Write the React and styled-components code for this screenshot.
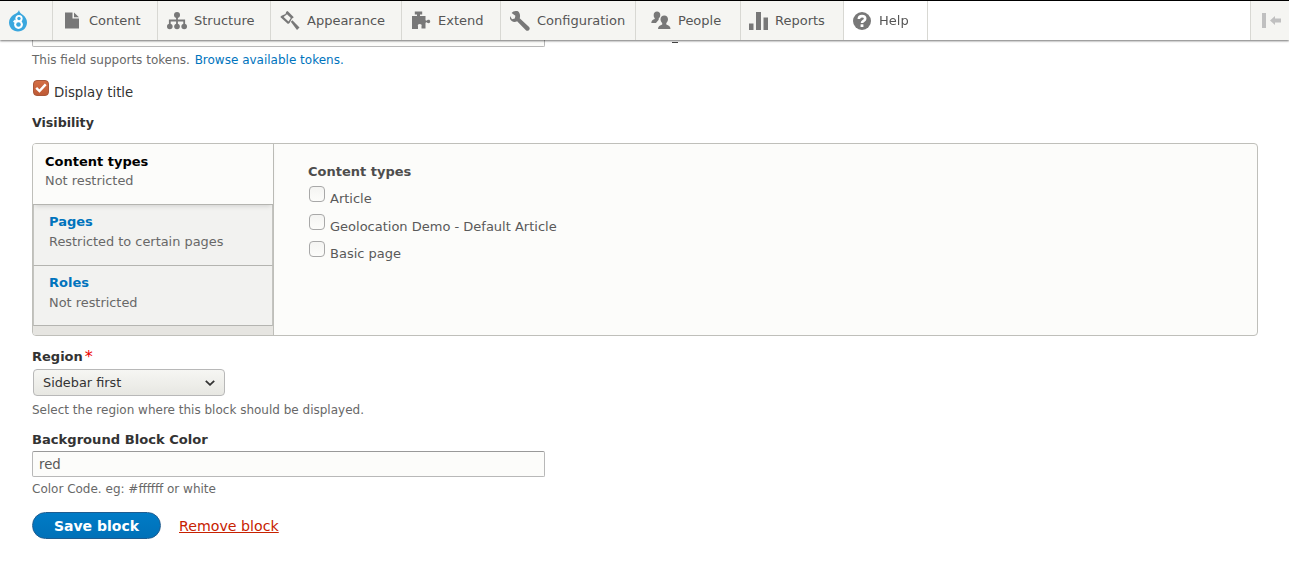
import styled, { createGlobalStyle } from "styled-components";

const GlobalStyle = createGlobalStyle`
  html, body {
    margin: 0;
    padding: 0;
    background: #fff;
    font-family: "DejaVu Sans", sans-serif;
    color: #333;
  }
`;

const ICON = "#787878";

const DrupalLogo = () => (
  <svg width="20" height="22" viewBox="0 0 20 22">
    <path
      fill="#3aa7de"
      d="M11 0c.5 2.500 2 3.500 4 5 2.500 2 4 4.500 4 7.500 0 5-4 9-9 9s-9-4-9-9c0-3.500 2-6 5-8C9 3 10.500 2 11 0z"
    />
    <circle cx="11" cy="8.500" r="3.600" fill="#fff" />
    <circle cx="10.500" cy="14.500" r="4.400" fill="#fff" />
    <circle cx="11" cy="8.500" r="1.700" fill="#3aa7de" />
    <circle cx="10.500" cy="14.500" r="2.300" fill="#3aa7de" />
    <path fill="#fff" d="M5 11.500l2-2 1.500 1.500-2 2z" />
  </svg>
);

const FileIcon = () => (
  <svg width="14" height="17" viewBox="0 0 14 17">
    <path fill={ICON} d="M0 .5h7.500v6h6.500v10H0zM9 .5l5 4.700H9z" />
  </svg>
);

const StructureIcon = () => (
  <svg width="20" height="18" viewBox="0 0 20 18">
    <circle cx="10" cy="3" r="3" fill={ICON} />
    <circle cx="2.800" cy="14.500" r="2.800" fill={ICON} />
    <circle cx="10" cy="14.500" r="2.800" fill={ICON} />
    <circle cx="17.200" cy="14.500" r="2.800" fill={ICON} />
    <path fill="none" stroke={ICON} strokeWidth="1.800" d="M10 4v8M2.800 12V8.500h14.400V12" />
  </svg>
);

const GavelIcon = () => (
  <svg width="20" height="20" viewBox="0 0 20 20">
    <path fill={ICON} d="M7.600 0L13.800 6.200 11.800 7.800 9.600 12 8 13 .3 6 1.500 4.800 5.500 3 6.200 .8z" />
    <path fill="#f5f5f2" d="M7 3.300L10.800 7 8.500 10.500 3.600 6z" />
    <path fill={ICON} d="M10.800 10.700L12.400 9.300 19.500 16.500 17 19z" />
  </svg>
);

const PuzzleIcon = () => (
  <svg width="20" height="19" viewBox="0 0 20 19">
    <path
      fill={ICON}
      d="M1 5h5V3.500H3.800V.5h7.400v3H9V5h5.500v4c.5 1 1 .8 1.700.3 1.200-.8 3-.6 3 1.200s-1.800 2-3 1.200c-.7-.5-1.200-.7-1.700.3v5.500H10.500v-2.200c.7-1.500-.5-2.300-1.700-2.300S6.300 13.800 7 15.500V18H1z"
    />
  </svg>
);

const WrenchIcon = () => (
  <svg width="20" height="20" viewBox="0 0 20 20">
    <path
      fill={ICON}
      d="M7.900.3c-2.300-.8-4.900 0-6.300 1.800L5.400 4.700 4.800 7.500 2 8.200-.2 4.600C-1 7.800 1.400 10.800 4.500 10.900c1 0 1.800-.1 2.600-.6l8.800 8.900c.8.8 2.100.8 2.900 0l.3-.3c.8-.8.800-2 0-2.800L9.700 7.200c.9-2.700.1-5.700-1.800-6.900z"
    />
  </svg>
);

const PeopleIcon = () => (
  <svg width="20" height="19" viewBox="0 0 20 19">
    <path
      fill={ICON}
      d="M6 .5c2.100 0 3.300 1.500 3.300 3.500 0 1.500-.7 2.700-1.600 3.500v1.300C6.900 9.500 6 10.700 5 12H.3c0-2.500 1.600-3.300 3.400-4V7C2.900 6.300 2.700 5.200 2.700 4 2.700 2 3.900.5 6 .5z"
    />
    <path
      fill={ICON}
      d="M13.300 4.500c2.300 0 3.700 1.600 3.700 3.800 0 1.500-.7 2.900-1.700 3.700v1.500c2.200.8 4.200 1.800 4.200 4.500H7c0-2.700 2-3.700 4.200-4.500V12c-1-.8-1.700-2.200-1.700-3.700 0-2.200 1.500-3.800 3.800-3.800z"
    />
  </svg>
);

const BarsIcon = () => (
  <svg width="19" height="18" viewBox="0 0 19 18">
    <path fill={ICON} d="M0 11.500h4.500V18H0zM7 0h5v18H7zM14.500 5.500H19V18h-4.500z" />
  </svg>
);

const HelpIcon = () => (
  <svg width="18" height="18" viewBox="0 0 18 18">
    <circle cx="9" cy="9" r="9" fill={ICON} />
    <path
      fill="none"
      stroke="#fff"
      strokeWidth="2.600"
      d="M5.800 7c.1-1.900 1.400-2.900 3.200-2.900S12.200 5.100 12.200 6.700c0 2.100-3.200 2.300-3.200 4.300"
    />
    <rect x="7.600" y="12.300" width="2.800" height="2.700" fill="#fff" />
  </svg>
);

const CollapseIcon = () => (
  <svg width="20" height="15" viewBox="0 0 20 15">
    <path fill="#c0c0c0" d="M0 0h4v15H0zM8 7.500l5-4.500v2.500h6v4h-6V12z" />
  </svg>
);

const CheckIcon = () => (
  <svg width="12" height="10" viewBox="0 0 12 10">
    <path fill="none" stroke="#fff" strokeWidth="2.400" d="M1.200 4.800l3.300 3.300 6.200-6.700" />
  </svg>
);

const menuItems = [
  { label: "Content", width: 105, icon: <FileIcon />, offset: 12, gap: 10 },
  { label: "Structure", width: 113, icon: <StructureIcon />, offset: 9, gap: 7 },
  { label: "Appearance", width: 131, icon: <GavelIcon />, offset: 9, gap: 7 },
  { label: "Extend", width: 99, icon: <PuzzleIcon />, offset: 9, gap: 7 },
  { label: "Configuration", width: 135, icon: <WrenchIcon />, offset: 9, gap: 7 },
  { label: "People", width: 105, icon: <PeopleIcon />, offset: 15, gap: 7 },
  { label: "Reports", width: 103, icon: <BarsIcon />, offset: 8, gap: 7 },
  { label: "Help", width: 84, icon: <HelpIcon />, offset: 9, gap: 8, active: true },
];

const blocks = [
  { title: "Pages", summary: "Restricted to certain pages" },
  { title: "Roles", summary: "Not restricted" },
];

const contentTypes = ["Article", "Geolocation Demo - Default Article", "Basic page"];

export default function App() {
  return (
    <>
      <GlobalStyle />
      <Toolbar>
        <LogoTab>
          <DrupalLogo />
        </LogoTab>
        {menuItems.map((item) => (
          <MenuTab
            key={item.label}
            $width={item.width}
            $offset={item.offset}
            $gap={item.gap}
            $active={item.active}
          >
            {item.icon}
            <span>{item.label}</span>
          </MenuTab>
        ))}
        <ToolbarSpacer />
        <CollapseTab>
          <CollapseIcon />
        </CollapseTab>
      </Toolbar>

      <Page>
        <TitleRow>
          <TextInput as="div" $height={30} />
          <Descender />
        </TitleRow>
        <Description $top={6}>
          This field supports tokens. <TokenLink href="#">Browse available tokens.</TokenLink>
        </Description>

        <DisplayRow>
          <CheckedBox>
            <CheckIcon />
          </CheckedBox>
          <DisplayLabel>Display title</DisplayLabel>
        </DisplayRow>

        <SectionLabel>Visibility</SectionLabel>

        <VerticalTabs>
          <TabList>
            <ActiveTab>
              <ActiveTitle>Content types</ActiveTitle>
              <ActiveSummary>Not restricted</ActiveSummary>
            </ActiveTab>
            {blocks.map((block) => (
              <TabItem key={block.title}>
                <TabTitle>{block.title}</TabTitle>
                <TabSummary>{block.summary}</TabSummary>
              </TabItem>
            ))}
          </TabList>
          <TabPane>
            <PaneTitle>Content types</PaneTitle>
            <OptionList>
              {contentTypes.map((name) => (
                <OptionRow key={name}>
                  <EmptyBox />
                  <OptionLabel>{name}</OptionLabel>
                </OptionRow>
              ))}
            </OptionList>
          </TabPane>
        </VerticalTabs>

        <RegionLabel>
          Region<Required>*</Required>
        </RegionLabel>
        <SelectBox>
          <span>Sidebar first</span>
          <svg width="10" height="6" viewBox="0 0 10 6">
            <path fill="none" stroke="#333" strokeWidth="1.800" d="M.8.8L5 4.800 9.200.8" />
          </svg>
        </SelectBox>
        <Description $top={7}>Select the region where this block should be displayed.</Description>

        <ColorLabel>Background Block Color</ColorLabel>
        <ColorInput defaultValue="red" $height={26} />
        <Description $top={5}>Color Code. eg: #ffffff or white</Description>

        <Actions>
          <SaveButton>Save block</SaveButton>
          <RemoveLink href="#">Remove block</RemoveLink>
        </Actions>
      </Page>
    </>
  );
}

const Toolbar = styled.div`
  position: fixed;
  top: 0;
  left: 0;
  right: 0;
  z-index: 10;
  box-sizing: border-box;
  display: flex;
  height: 40px;
  background: #fff;
  border-top: 1px solid #000;
  box-shadow: 0 1px 2px rgba(0, 0, 0, 0.55);
`;

const LogoTab = styled.div`
  box-sizing: border-box;
  width: 53px;
  padding: 9px 0 0 8px;
  background: #f5f5f2;
  border-right: 1px solid #d8d8d3;
`;

const MenuTab = styled.div`
  box-sizing: border-box;
  display: flex;
  align-items: center;
  flex: none;
  width: ${(p) => p.$width}px;
  padding-left: ${(p) => p.$offset}px;
  gap: ${(p) => p.$gap}px;
  background: ${(p) => (p.$active ? "#fff" : "#f5f5f2")};
  border-right: 1px solid #d8d8d3;
  font-size: 13px;
  color: #565656;
`;

const ToolbarSpacer = styled.div`
  flex: 1;
`;

const CollapseTab = styled.div`
  box-sizing: border-box;
  width: 39px;
  padding: 12px 0 0 11px;
  background: #f5f5f2;
  border-left: 1px solid #d8d8d3;
`;

const Page = styled.div`
  box-sizing: border-box;
  width: 1289px;
  height: 578px;
  padding: 17px 31px 0 32px;
  overflow: hidden;
`;

const TitleRow = styled.div`
  display: flex;
  align-items: flex-end;
`;

const TextInput = styled.input`
  display: block;
  box-sizing: border-box;
  width: 513px;
  height: ${(p) => p.$height}px;
  padding: 0 6px;
  background: #fcfcfa;
  border: 1px solid #b8b8b8;
  border-top-color: #999;
  border-radius: 2px;
  font: 13.3px "DejaVu Sans", sans-serif;
  color: #595959;
`;

const ColorInput = styled(TextInput)`
  margin-top: 3px;
`;

const Descender = styled.div`
  width: 6px;
  height: 1px;
  margin: 0 0 4px 127px;
  background: #444;
`;

const Description = styled.div`
  margin-top: ${(p) => p.$top}px;
  font-size: 12px;
  line-height: 15px;
  color: #686868;
`;

const TokenLink = styled.a`
  margin-left: 1px;
  color: #0074bd;
  text-decoration: none;
`;

const DisplayRow = styled.div`
  display: flex;
  align-items: flex-start;
  margin-top: 12px;
  padding-left: 1px;
`;

const CheckedBox = styled.div`
  box-sizing: border-box;
  display: flex;
  align-items: center;
  justify-content: center;
  width: 16px;
  height: 16px;
  background: #c9623a;
  background-image: linear-gradient(#d46f45, #bf5a34);
  border: 1px solid #a9583a;
  border-radius: 4px;
`;

const DisplayLabel = styled.label`
  margin: 5px 0 0 5px;
  font-size: 13.3px;
  line-height: 16px;
  color: #333;
`;

const SectionLabel = styled.div`
  margin-top: 14px;
  font-size: 12.6px;
  font-weight: bold;
  line-height: 16px;
  color: #333;
`;

const VerticalTabs = styled.div`
  box-sizing: border-box;
  display: flex;
  height: 193px;
  margin-top: 12px;
  background: #fcfcfa;
  border: 1px solid #bfbfba;
  border-radius: 4px;
  overflow: hidden;
`;

const TabList = styled.div`
  box-sizing: border-box;
  width: 241px;
  flex: none;
  background: #e6e5e1;
  border-right: 1px solid #bfbfba;
`;

const ActiveTab = styled.div`
  box-sizing: border-box;
  height: 61px;
  padding: 10px 12px 0;
  background: #fcfcfa;
  border-bottom: 1px solid #b4b4b0;
  box-shadow: 0 3px 5px -2px rgba(0, 0, 0, 0.15);
  position: relative;
`;

const TabItem = styled.div`
  box-sizing: border-box;
  height: 60.5px;
  padding: 9px 15px 0;
  background: #f2f2f0;
  border: 1px solid #c4c4c0;
  border-width: 0 1px 1px 1px;
  border-bottom-color: #b4b4b0;
`;

const ActiveTitle = styled.div`
  font-size: 13px;
  font-weight: bold;
  line-height: 16px;
  color: #000;
`;

const TabTitle = styled(ActiveTitle)`
  color: #0074bd;
`;

const TabSummary = styled.div`
  margin-top: 4px;
  font-size: 12.9px;
  line-height: 15px;
  color: #686868;
`;

const ActiveSummary = styled(TabSummary)`
  margin-top: 3px;
`;

const TabPane = styled.div`
  flex: 1;
  padding: 20px 34px;
`;

const PaneTitle = styled.div`
  font-size: 13px;
  font-weight: bold;
  line-height: 16px;
  color: #4d4d4d;
`;

const OptionList = styled.div`
  margin-top: 6px;
`;

const OptionRow = styled.div`
  display: flex;
  align-items: flex-start;
  height: 27.5px;
`;

const EmptyBox = styled.div`
  box-sizing: border-box;
  width: 16px;
  height: 16px;
  margin: 0 1px 0 1px;
  background: linear-gradient(#f4f4f2, #fcfcfa);
  border: 1px solid #a8a8a8;
  border-radius: 4px;
`;

const OptionLabel = styled.label`
  margin: 5px 0 0 4px;
  font-size: 13px;
  line-height: 16px;
  color: #595959;
`;

const RegionLabel = styled.div`
  display: flex;
  margin-top: 12px;
  font-size: 13px;
  font-weight: bold;
  line-height: 18px;
  color: #333;
`;

const Required = styled.span`
  margin: 2px 0 0 2px;
  color: #e00;
  font-size: 16px;
  font-weight: normal;
  line-height: 14px;
`;

const SelectBox = styled.div`
  box-sizing: border-box;
  display: flex;
  align-items: center;
  justify-content: space-between;
  width: 192px;
  height: 27px;
  margin: 3px 0 0 1px;
  padding: 0 9px 0 9px;
  background: linear-gradient(#f6f6f3, #e7e7e2);
  border: 1px solid #b8b8b8;
  border-radius: 4px;
  font-size: 12.85px;
  color: #333;
`;

const ColorLabel = styled.div`
  margin-top: 14px;
  font-size: 13.1px;
  font-weight: bold;
  line-height: 16px;
  color: #333;
`;

const Actions = styled.div`
  display: flex;
  align-items: center;
  margin-top: 15px;
`;

const SaveButton = styled.button`
  box-sizing: border-box;
  width: 129px;
  height: 27px;
  padding: 0;
  background: linear-gradient(#007bc6, #0071b8);
  border: 1px solid #1e5c90;
  border-radius: 20px;
  font: bold 14px "DejaVu Sans", sans-serif;
  color: #fff;
`;

const RemoveLink = styled.a`
  margin-left: 18px;
  font-size: 14.2px;
  color: #c72100;
`;
